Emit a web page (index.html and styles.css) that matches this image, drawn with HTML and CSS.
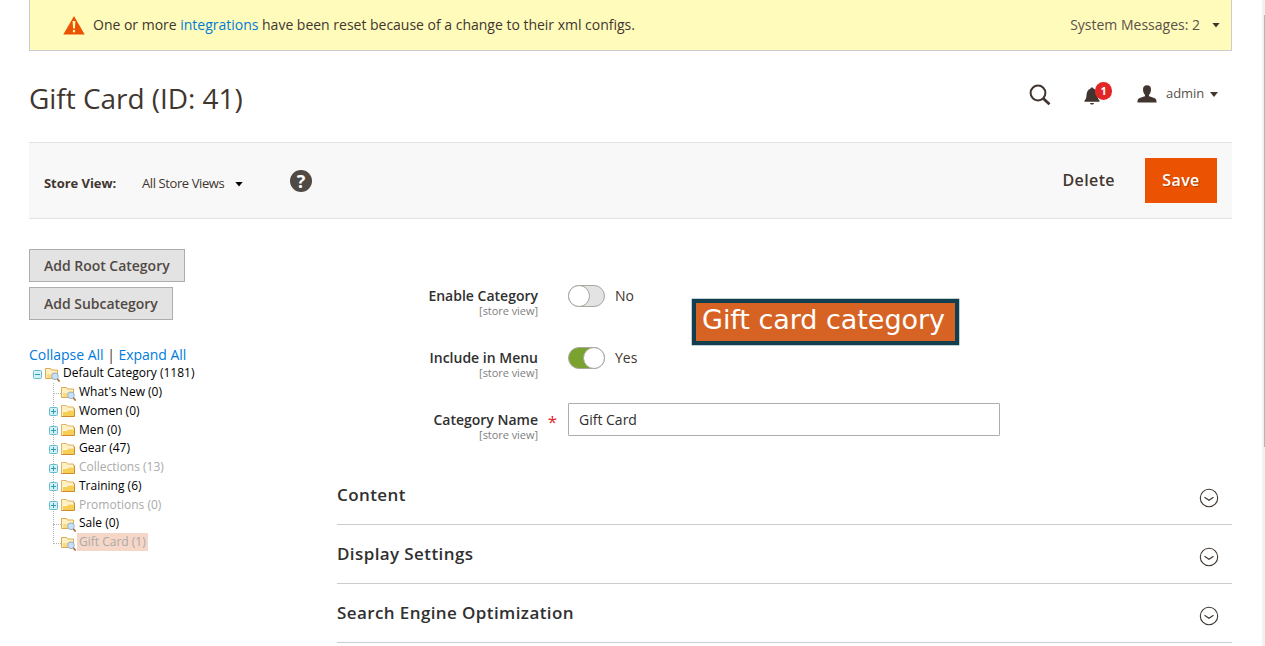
FILE: index.html
```html
<!DOCTYPE html>
<html lang="en">
<head>
<meta charset="utf-8">
<title>Gift Card (ID: 41)</title>
<link rel="stylesheet" href="styles.css">
</head>
<body>
<svg class="defs" width="0" height="0">
  <symbol id="folder" viewBox="0 0 16 16">
    <path d="M1.500 13.500V2.500h5l1 1.500h6v9.500z" fill="#fdf0c2" stroke="#e3b366"/>
    <path d="M3 13V8.500h4l1.500-1.500H14v6z" fill="#f6cf57"/>
    <path d="M3 8.500h4l1.500-1.500H14" fill="none" stroke="#fff8dc"/>
    <path d="M1.500 13.500h13v-8" fill="none" stroke="#cf8a2b"/>
  </symbol>
  <symbol id="leaf" viewBox="0 0 16 16">
    <path d="M1.500 12.500v-10h5l1 1.500h6v8.500z" fill="#fdf0c2" stroke="#dfa950"/>
    <path d="M3 12V8h4l1.500-1.500H13V12z" fill="#f8dc84"/>
    <circle cx="11" cy="10.300" r="3.300" fill="#c8e0f7" stroke="#94b3d2"/>
    <path d="M13.300 12.900l2.400 2.700" stroke="#b06f3c" stroke-width="1.700"/>
  </symbol>
  <symbol id="plus" viewBox="0 0 9 9">
    <rect x=".5" y=".5" width="8" height="8" rx="1" fill="#d5f0f5" stroke="#62bdcd"/>
    <path d="M2 4.500h5M4.500 2v5" stroke="#2f9fb5"/>
  </symbol>
  <symbol id="minus" viewBox="0 0 9 9">
    <rect x=".5" y=".5" width="8" height="8" rx="1" fill="#d5f0f5" stroke="#62bdcd"/>
    <path d="M2 4.500h5" stroke="#2f9fb5"/>
  </symbol>
  <symbol id="expand" viewBox="0 0 20 20">
    <circle cx="10" cy="10" r="8.700" fill="none" stroke="#41362f" stroke-width="1.100"/>
    <path d="M5.500 9.300l4.500 3 4.500-3" fill="none" stroke="#41362f" stroke-width="1.200"/>
  </symbol>
</svg>
<div class="page">
  <div class="notice">
    <svg class="warn" width="22" height="20" viewBox="0 0 22 20"><path d="M11 1L21.700 19.500H.3z" fill="#eb5202"/><path d="M9.600 6h2.800l-.5 7.500h-1.800zM9.900 15h2.200v2.200H9.900z" fill="#fffbbb"/></svg>
    <span class="notice-text">One or more <a>integrations</a> have been reset because of a change to their xml configs.</span>
    <span class="messages">System Messages: 2</span><i class="caret"></i>
  </div>
  <header class="header">
    <h1>Gift Card (ID: 41)</h1>
    <svg class="search" width="22" height="22" viewBox="0 0 22 22"><circle cx="9" cy="9" r="7.400" fill="none" stroke="#41362f" stroke-width="2"/><path d="M14 14.300l6.500 6" stroke="#41362f" stroke-width="2.800"/></svg>
    <div class="bell">
      <svg width="16" height="18" viewBox="0 0 16 18"><path d="M8 .5c.9 0 1.400.6 1.600 1.200C12 2.500 13.300 4.500 13.500 8c.1 3 .6 4.500 2 5.400v1.300H.5v-1.300C1.900 12.500 2.400 11 2.500 8 2.700 4.500 4 2.500 6.400 1.700 6.600 1.100 7.100.5 8 .5zM6 15.900h4c-.2 1-.9 1.500-2 1.500s-1.800-.5-2-1.500z" fill="#41362f"/></svg>
      <span class="badge">1</span>
    </div>
    <svg class="user" width="20" height="18" viewBox="0 0 20 18"><path d="M10 .3c2.800 0 4.100 1.700 4 4.400-.1 2.300-.9 4-2 5.100v1.500c2.200.8 5.500 1.500 6.700 2.600.7.700.8 1.700.8 3.600H.5c0-1.900.1-2.900.8-3.600C2.500 12.800 5.800 12.100 8 11.300V9.800C6.900 8.700 6.100 7 6 4.700 5.900 2 7.200.3 10 .3z" fill="#41362f"/></svg>
    <span class="admin">admin</span><i class="caret"></i>
  </header>
  <div class="toolbar">
    <b class="store-label">Store View:</b>
    <span class="store-value">All Store Views</span><i class="caret black"></i>
    <span class="help">?</span>
    <span class="delete">Delete</span>
    <span class="save">Save</span>
  </div>
  <main class="columns">
    <aside class="side">
      <span class="btn">Add Root Category</span>
      <span class="btn">Add Subcategory</span>
      <div class="links"><a>Collapse All</a> | <a>Expand All</a></div>
      <div class="tree">
        <div class="row root"><svg class="tog"><use href="#minus"/></svg><svg class="ico"><use href="#leaf"/></svg><span>Default Category (1181)</span></div>
        <div class="kids">
          <div class="row"><i class="tog"></i><svg class="ico"><use href="#leaf"/></svg><span>What's New (0)</span></div>
          <div class="row"><svg class="tog"><use href="#plus"/></svg><svg class="ico"><use href="#folder"/></svg><span>Women (0)</span></div>
          <div class="row"><svg class="tog"><use href="#plus"/></svg><svg class="ico"><use href="#folder"/></svg><span>Men (0)</span></div>
          <div class="row"><svg class="tog"><use href="#plus"/></svg><svg class="ico"><use href="#folder"/></svg><span>Gear (47)</span></div>
          <div class="row off"><svg class="tog"><use href="#plus"/></svg><svg class="ico"><use href="#folder"/></svg><span>Collections (13)</span></div>
          <div class="row"><svg class="tog"><use href="#plus"/></svg><svg class="ico"><use href="#folder"/></svg><span>Training (6)</span></div>
          <div class="row off"><svg class="tog"><use href="#plus"/></svg><svg class="ico"><use href="#folder"/></svg><span>Promotions (0)</span></div>
          <div class="row"><i class="tog"></i><svg class="ico"><use href="#leaf"/></svg><span>Sale (0)</span></div>
          <div class="row off selected"><i class="tog"></i><svg class="ico"><use href="#leaf"/></svg><span>Gift Card (1)</span></div>
        </div>
      </div>
    </aside>
    <section class="form">
      <div class="field"><div class="label">Enable Category<small>[store view]</small></div><div class="req"></div><i class="switch"></i><span class="state">No</span></div>
      <div class="field"><div class="label">Include in Menu<small>[store view]</small></div><div class="req"></div><i class="switch on"></i><span class="state">Yes</span></div>
      <div class="field"><div class="label">Category Name<small>[store view]</small></div><div class="req">*</div><div class="input">Gift Card</div></div>
      <div class="callout">Gift card category</div>
      <div class="sections">
        <div class="section"><span>Content</span><svg><use href="#expand"/></svg></div>
        <div class="section"><span>Display Settings</span><svg><use href="#expand"/></svg></div>
        <div class="section"><span>Search Engine Optimization</span><svg><use href="#expand"/></svg></div>
      </div>
    </section>
  </main>
</div>
<div class="scrollbar"></div>
</body>
</html>
```
FILE: styles.css
```css
*, *::before, *::after { box-sizing: border-box; }
html, body { margin: 0; height: 646px; overflow: hidden; }
body { display: flex; background: #fff; color: #41362f; font: 14px/19px "Open Sans", sans-serif; }
a { color: #007bdb; }
svg { display: block; flex: none; }
.defs { position: absolute; }
.page { width: 1203px; margin-left: 29px; flex: none; }
.scrollbar { width: 3px; margin-left: 30px; background: #f1f1f1; position: relative; }
.scrollbar::after { content: ""; position: absolute; left: 2px; top: 15px; width: 1px; height: 432px; background: #b5b5b5; }
.caret { flex: none; width: 8px; height: 5px; background: #41362f; clip-path: polygon(0 0, 100% 0, 50% 100%); }
.caret.black { background: #000; }

.notice { display: flex; align-items: center; height: 51px; padding: 0 11px 1px 33px; background: #fffbbb; border: 1px solid #ccc; border-top: 0; }
.notice .caret { margin-top: 1px; }
.warn { margin-right: 8px; }
.notice-text { flex: 1; letter-spacing: -.01px; }
.messages { margin-right: 12px; color: #5a514a; }

.header { display: flex; height: 91px; padding: 0 14px 0 0; align-items: flex-start; }
h1 { flex: 1; margin: 28px 0 0; font-size: 28px; line-height: 38px; font-weight: 400; letter-spacing: -.04px; }
.search { margin: 33px 33px 0 0; }
.bell { position: relative; width: 28px; margin: 36px 25px 0 0; }
.badge { position: absolute; left: 11px; top: -5px; width: 17px; height: 18px; border-radius: 9px; background: #e22626; color: #fff; font-size: 11px; font-weight: 700; line-height: 18px; text-align: center; }
.user { margin: 34px 9px 0 0; }
.admin { margin: 33px 6px 0 0; font-size: 13px; color: #5a514a; letter-spacing: -.1px; }
.header .caret { margin-top: 41px; }

.toolbar { display: flex; align-items: center; height: 77px; padding: 0 15px 0 15px; background: #f8f8f8; border: solid #e3e3e3; border-width: 1px 0; }
.store-label { width: 72px; white-space: nowrap; font-size: 13px; font-weight: 700; margin: 5px 26px 0 0; letter-spacing: -.05px; }
.store-value { width: 83px; white-space: nowrap; font-size: 13px; margin: 5px 10px 0 0; letter-spacing: -.4px; }
.toolbar .caret { margin-top: 7px; }
.help { width: 22px; height: 22px; margin: 1px 0 0 47px; border-radius: 50%; background: #514943; color: #fff; font-weight: 700; font-size: 18px; line-height: 22px; text-align: center; }
.delete { margin-left: auto; font-size: 16px; font-weight: 600; letter-spacing: .4px; }
.save { width: 72px; height: 45px; margin-left: 30px; background: #eb5202; color: #fff; font-size: 16px; font-weight: 600; line-height: 45px; text-align: center; letter-spacing: .4px; text-shadow: 1px 1px 0 rgba(0, 0, 0, .25); }

.columns { display: flex; }
.side { width: 308px; padding-top: 30px; display: flex; flex-direction: column; align-items: flex-start; }
.btn { height: 33px; margin-bottom: 5px; padding: 0 14px; border: 1px solid #adadad; background: #e3e3e3; color: #514943; font-weight: 600; line-height: 32px; letter-spacing: -.02px; }
.links { margin-top: 20px; height: 18px; letter-spacing: -.02px; }
.tree { padding-top: 1px; font-size: 12px; color: #000; }
.row { display: flex; height: 18.750px; align-items: center; }
.row span { height: 18px; line-height: 18px; padding: 0 2px; }
.root { padding-left: 4px; }
.tog { width: 9px; height: 9px; margin: 2px 2px 0 0; flex: none; }
.ico { width: 16px; height: 16px; margin: 1px 1px 0 0; }
.kids { position: relative; padding-left: 20px; }
.kids::before { content: ""; position: absolute; left: 24px; top: 0; height: 161px; border-left: 1px dotted #b5b5b5; }
.kids .tog { position: relative; }
i.tog::before { content: ""; position: absolute; left: 4px; top: 4px; width: 8px; border-top: 1px dotted #b5b5b5; }
.off { color: #aaa; }
.selected span { background: #f5d6c7; }

.form { position: relative; width: 895px; padding-top: 60px; }
.field { display: flex; height: 62px; padding-top: 7px; }
.label { width: 201px; text-align: right; font-weight: 600; color: #303030; line-height: 20px; }
.label small { display: block; font-size: 11px; line-height: 13px; margin-top: -2px; font-weight: 400; color: #808080; letter-spacing: -.05px; }
.req { width: 30px; padding-right: 1px; text-align: center; color: #e22626; font-size: 17px; line-height: 24px; }
.switch { position: relative; width: 37px; height: 22px; margin-top: -1px; border: 1px solid #aaa6a0; border-radius: 11px; background: #e3e3e3; }
.switch::after { content: ""; position: absolute; left: -1px; top: -1px; width: 22px; height: 22px; border: 1px solid #aaa6a0; border-radius: 50%; background: #fff; }
.switch.on { background: #79a22e; }
.switch.on::after { left: 14px; }
.state { margin-left: 10px; line-height: 20px; }
.input { width: 432px; height: 33px; margin-top: -7px; padding: 0 10px; border: 1px solid #adadad; border-radius: 1px; line-height: 32px; color: #303030; }
.callout { position: absolute; left: 355px; top: 80px; width: 267px; height: 46px; border: 4px solid #123f4f; box-shadow: 0 0 0 .5px #123f4f80; background: #d66324; color: #fff; font: 27px/34px "DejaVu Sans", sans-serif; letter-spacing: -.04px; padding-left: 6px; white-space: nowrap; }
.sections { padding-top: 1px; }
.section { display: flex; justify-content: space-between; height: 59px; padding: 17px 13px 0 0; border-bottom: 1px solid #ccc; font-size: 17px; font-weight: 600; line-height: 24px; letter-spacing: .4px; color: #303030; }
.section svg { width: 20px; height: 20px; margin-top: 5px; }
```
